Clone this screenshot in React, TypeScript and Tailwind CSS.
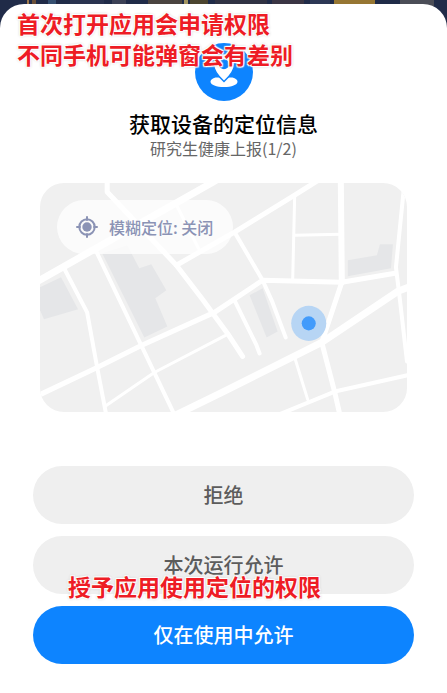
import React from 'react';

const MAP_BLOCKS = [
  '0,104 21,94 38,126 4,136 0,127',
  '62,70 87,62 99,85 111,81 126,107 115,115 127,143 104,154',
  '307,77 336,72 339,61 352,61 350,85 307,93',
  '209,112 222,105 237,148 226,154',
];

const MAP_ROADS = [
  { d: 'M-4 99 171 0 176 -3', width: 7 },
  { d: 'M67 -3V9L136 82 162 116 187 150 202 173', width: 5 },
  { d: 'M136 82 194 49 254 12 278 -3', width: 5 },
  { d: 'M136 22 159 67', width: 3 },
  { d: 'M24 85 47 129 57 184 66 231', width: 4 },
  { d: 'M56 68 101 162 114 189 134 231', width: 4 },
  { d: 'M-2 212 57 184 101 162 174 129 222 97 301 99 354 90', width: 5 },
  { d: 'M66 222 114 189 187 151', width: 3 },
  { d: 'M130 234 179 210 281 159 357 108 370 103', width: 7 },
  { d: 'M300 -3 301 99', width: 6 },
  { d: 'M301 99 281 159 294 209 299 231', width: 5 },
  { d: 'M363 4 355 84 359 117 366 178', width: 4 },
  { d: 'M254 12 252 97M254 52 300 51', width: 3 },
  { d: 'M194 49 222 97 231 117 245 154', width: 4 },
  { d: 'M194 117 216 162 219 170', width: 4 },
  { d: 'M254 174 267 216', width: 3 },
  { d: 'M238 231 294 208 370 191', width: 4 },
];

const BUILDINGS = [
  { x: 27, width: 2, fill: '#a07a4c' },
  { x: 32, width: 4, fill: '#6b5039' },
  { x: 48, width: 8, fill: '#354f70' },
  { x: 70, width: 34, fill: '#2a3350' },
  { x: 112, width: 14, fill: '#3c4156' },
  { x: 148, width: 34, fill: '#4a4440' },
  { x: 184, width: 4, fill: '#a39561' },
  { x: 190, width: 18, fill: '#4c452f' },
  { x: 215, width: 52, fill: '#303243' },
  { x: 272, width: 32, fill: '#3a3544' },
  { x: 310, width: 20, fill: '#2d3855' },
  { x: 334, width: 41, fill: '#967632' },
  { x: 400, width: 34, fill: '#4b4d57' },
];

const Backdrop = () => (
  <svg className="absolute inset-x-0 top-0 h-7 w-full" viewBox="0 0 447 28" preserveAspectRatio="none" aria-hidden="true">
    <rect width="447" height="28" fill="#202b48" />
    {BUILDINGS.map((b) => (
      <rect key={b.x} x={b.x} width={b.width} height="6" fill={b.fill} />
    ))}
  </svg>
);

const LocationBadge = () => (
  <svg className="size-[58px]" viewBox="0 0 58 58" aria-hidden="true">
    <circle cx="29" cy="29" r="29" fill="#0d84ff" />
    <path
      d="M20.500 34.500c-3 .8-5 2.300-5 4.200 0 3.100 6 5.300 13.500 5.300s13.500-2.200 13.500-5.300c0-1.900-2-3.400-5-4.200z"
      fill="#fff"
    />
    <path
      fillRule="evenodd"
      d="M29 10.500c-6 0-10.500 4.700-10.500 10.500C18.500 29 24.500 34.500 29 38.500c4.500-4 10.500-9.500 10.500-17.500C39.500 15.200 35 10.500 29 10.500zm0 6.500a4.300 4.300 0 1 1 0 8.600 4.300 4.300 0 0 1 0-8.600z"
      fill="#fff"
      stroke="#0d84ff"
      strokeWidth="1.500"
    />
  </svg>
);

const CrosshairIcon = () => (
  <svg className="size-[22px]" viewBox="0 0 22 22" fill="none" stroke="#8b93b5" aria-hidden="true">
    <circle cx="11" cy="11" r="7.700" strokeWidth="2" />
    <circle cx="11" cy="11" r="4.700" fill="#8b93b5" stroke="none" />
    <path d="M11 1v3M11 18v3M1 11h3M18 11h3" strokeWidth="2" strokeLinecap="round" />
  </svg>
);

const LocationMap = () => (
  <div className="relative mx-10 mt-6 overflow-hidden rounded-[24px] bg-[#f0f0f0]">
    <svg className="block w-full" viewBox="0 0 366 228" aria-hidden="true">
      {MAP_BLOCKS.map((points) => (
        <polygon key={points} points={points} fill="#e5e6e8" />
      ))}
      <g fill="none" stroke="#fff" strokeLinecap="round" strokeLinejoin="round">
        {MAP_ROADS.map((road) => (
          <path key={road.d} d={road.d} strokeWidth={road.width} />
        ))}
      </g>
      <circle cx="268" cy="140" r="17.500" fill="#b7d5f4" />
      <circle cx="268" cy="140" r="7" fill="#429bfb" />
    </svg>
    <button className="absolute top-[17px] left-[17px] flex h-[54px] items-center gap-[11px] rounded-full bg-white/75 pr-5 pl-[19px] text-base font-medium text-[#8b93b5]">
      <CrosshairIcon />
      模糊定位: 关闭
    </button>
  </div>
);

// Red captions written over the dialog
const Caption = ({ className, children }: { className: string; children: React.ReactNode }) => (
  <p
    className={`pointer-events-none absolute text-[23px] leading-[31px] font-bold whitespace-nowrap text-[#ee1c25] [text-shadow:1px_1px_1px_#fff,-1px_-1px_1px_#fff,1px_-1px_1px_#fff,-1px_1px_1px_#fff,0_0_3px_#999] ${className}`}
  >
    {children}
  </p>
);

const App = () => {
  return (
    <div className="relative min-h-screen bg-white pt-1 font-['Noto_Sans_CJK_SC',sans-serif]">
      <Backdrop />
      <main className="relative rounded-t-[24px] bg-white pt-[39px] pb-7">
        <header className="flex flex-col items-center">
          <LocationBadge />
          <h1 className="mt-2 text-[21px] leading-7 font-medium text-black">获取设备的定位信息</h1>
          <p className="text-base leading-[22px] text-[#666]">研究生健康上报(1/2)</p>
        </header>

        <LocationMap />

        <div className="mx-[33px] mt-[54px] flex flex-col gap-3 text-xl font-medium">
          <button className="h-[58px] rounded-full bg-[#efefef] text-[#5c5c5c]">拒绝</button>
          <div className="relative flex flex-col">
            <button className="h-[58px] rounded-full bg-[#efefef] text-[#5c5c5c]">本次运行允许</button>
            <Caption className="top-[35px] left-[35px]">授予应用使用定位的权限</Caption>
          </div>
          <button className="h-[58px] rounded-full bg-[#0d84ff] text-white">仅在使用中允许</button>
        </div>
      </main>
      <Caption className="top-2 left-[17px]">
        首次打开应用会申请权限
        <br />
        不同手机可能弹窗会有差别
      </Caption>
    </div>
  );
};

export default App;
